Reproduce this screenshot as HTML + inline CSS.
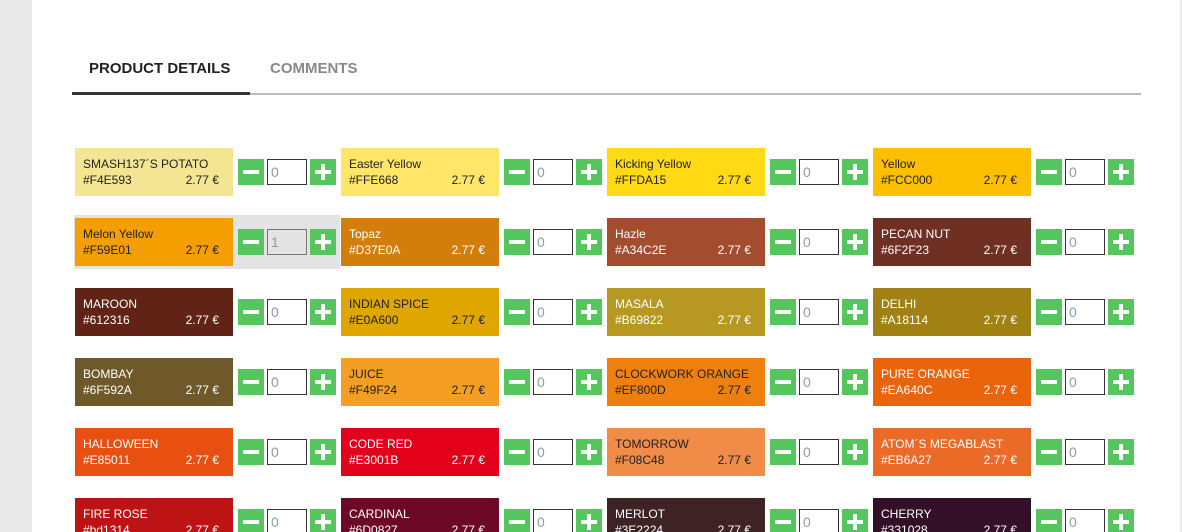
<!DOCTYPE html>
<html style="height:532px;overflow:hidden"><head><meta charset="utf-8"><style>
html,body{height:532px;overflow:hidden}
body{margin:0;width:1182px;background:#e9e9e9;font-family:"Liberation Sans",sans-serif;position:relative}
.page{position:absolute;left:32px;top:0;width:1148px;height:532px;background:#fff}
.tab{position:absolute;top:60px;font-size:15px;font-weight:bold}
.c{position:absolute;width:266px;height:54px}
.s{position:absolute;left:1px;top:3px;width:158px;height:48px;font-size:12px;color:#222}
.s .n{position:absolute;left:8px;top:9px;white-space:nowrap}
.s .h{position:absolute;left:8px;top:25px}
.s .p{position:absolute;right:14px;top:25px}
.w{color:#fff}
.b{position:absolute;top:14px;width:26px;height:26px;background:#55c65e}
.m{left:164px}.pl{left:236px}
.m::after{content:"";position:absolute;left:5px;top:11px;width:16px;height:4px;background:#fff}
.pl::before{content:"";position:absolute;left:5px;top:11px;width:16px;height:4px;background:#fff}
.pl::after{content:"";position:absolute;left:11px;top:5px;width:4px;height:16px;background:#fff}
.i{position:absolute;left:193px;top:14px;height:24px;border:1px solid #333;background:#fff;font-size:14px;color:#8a9ab0;line-height:24px;padding-left:3px;width:35px}
.hl{background:#e3e3e3}.hl .i{background:#e3e3e3;border-color:#777}
</style></head><body>
<div class="page"></div>
<div class="tab" style="left:89px;color:#222">PRODUCT DETAILS</div>
<div class="tab" style="left:270px;color:#888">COMMENTS</div>
<div style="position:absolute;left:72px;top:93px;width:1069px;height:2px;background:#bbb"></div>
<div style="position:absolute;left:72px;top:92px;width:178px;height:3px;background:#333"></div>

<div class="c" style="left:74px;top:145px"><div class="s" style="background:#F4E593"><span class="n">SMASH137´S POTATO</span><span class="h">#F4E593</span><span class="p">2.77 €</span></div><div class="b m"></div><div class="i">0</div><div class="b pl"></div></div>
<div class="c" style="left:340px;top:145px"><div class="s" style="background:#FFE668"><span class="n">Easter Yellow</span><span class="h">#FFE668</span><span class="p">2.77 €</span></div><div class="b m"></div><div class="i">0</div><div class="b pl"></div></div>
<div class="c" style="left:606px;top:145px"><div class="s" style="background:#FFDA15"><span class="n">Kicking Yellow</span><span class="h">#FFDA15</span><span class="p">2.77 €</span></div><div class="b m"></div><div class="i">0</div><div class="b pl"></div></div>
<div class="c" style="left:872px;top:145px"><div class="s" style="background:#FCC000"><span class="n">Yellow</span><span class="h">#FCC000</span><span class="p">2.77 €</span></div><div class="b m"></div><div class="i">0</div><div class="b pl"></div></div>

<div class="c hl" style="left:74px;top:215px"><div class="s" style="background:#F59E01"><span class="n">Melon Yellow</span><span class="h">#F59E01</span><span class="p">2.77 €</span></div><div class="b m"></div><div class="i">1</div><div class="b pl"></div></div>
<div class="c" style="left:340px;top:215px"><div class="s w" style="background:#D37E0A"><span class="n">Topaz</span><span class="h">#D37E0A</span><span class="p">2.77 €</span></div><div class="b m"></div><div class="i">0</div><div class="b pl"></div></div>
<div class="c" style="left:606px;top:215px"><div class="s w" style="background:#A34C2E"><span class="n">Hazle</span><span class="h">#A34C2E</span><span class="p">2.77 €</span></div><div class="b m"></div><div class="i">0</div><div class="b pl"></div></div>
<div class="c" style="left:872px;top:215px"><div class="s w" style="background:#6F2F23"><span class="n">PECAN NUT</span><span class="h">#6F2F23</span><span class="p">2.77 €</span></div><div class="b m"></div><div class="i">0</div><div class="b pl"></div></div>

<div class="c" style="left:74px;top:285px"><div class="s w" style="background:#612316"><span class="n">MAROON</span><span class="h">#612316</span><span class="p">2.77 €</span></div><div class="b m"></div><div class="i">0</div><div class="b pl"></div></div>
<div class="c" style="left:340px;top:285px"><div class="s" style="background:#E0A600"><span class="n">INDIAN SPICE</span><span class="h">#E0A600</span><span class="p">2.77 €</span></div><div class="b m"></div><div class="i">0</div><div class="b pl"></div></div>
<div class="c" style="left:606px;top:285px"><div class="s w" style="background:#B69822"><span class="n">MASALA</span><span class="h">#B69822</span><span class="p">2.77 €</span></div><div class="b m"></div><div class="i">0</div><div class="b pl"></div></div>
<div class="c" style="left:872px;top:285px"><div class="s w" style="background:#A18114"><span class="n">DELHI</span><span class="h">#A18114</span><span class="p">2.77 €</span></div><div class="b m"></div><div class="i">0</div><div class="b pl"></div></div>

<div class="c" style="left:74px;top:355px"><div class="s w" style="background:#6F592A"><span class="n">BOMBAY</span><span class="h">#6F592A</span><span class="p">2.77 €</span></div><div class="b m"></div><div class="i">0</div><div class="b pl"></div></div>
<div class="c" style="left:340px;top:355px"><div class="s" style="background:#F49F24"><span class="n">JUICE</span><span class="h">#F49F24</span><span class="p">2.77 €</span></div><div class="b m"></div><div class="i">0</div><div class="b pl"></div></div>
<div class="c" style="left:606px;top:355px"><div class="s" style="background:#EF800D"><span class="n">CLOCKWORK ORANGE</span><span class="h">#EF800D</span><span class="p">2.77 €</span></div><div class="b m"></div><div class="i">0</div><div class="b pl"></div></div>
<div class="c" style="left:872px;top:355px"><div class="s w" style="background:#EA640C"><span class="n">PURE ORANGE</span><span class="h">#EA640C</span><span class="p">2.77 €</span></div><div class="b m"></div><div class="i">0</div><div class="b pl"></div></div>

<div class="c" style="left:74px;top:425px"><div class="s w" style="background:#E85011"><span class="n">HALLOWEEN</span><span class="h">#E85011</span><span class="p">2.77 €</span></div><div class="b m"></div><div class="i">0</div><div class="b pl"></div></div>
<div class="c" style="left:340px;top:425px"><div class="s w" style="background:#E3001B"><span class="n">CODE RED</span><span class="h">#E3001B</span><span class="p">2.77 €</span></div><div class="b m"></div><div class="i">0</div><div class="b pl"></div></div>
<div class="c" style="left:606px;top:425px"><div class="s" style="background:#F08C48"><span class="n">TOMORROW</span><span class="h">#F08C48</span><span class="p">2.77 €</span></div><div class="b m"></div><div class="i">0</div><div class="b pl"></div></div>
<div class="c" style="left:872px;top:425px"><div class="s w" style="background:#EB6A27"><span class="n">ATOM´S MEGABLAST</span><span class="h">#EB6A27</span><span class="p">2.77 €</span></div><div class="b m"></div><div class="i">0</div><div class="b pl"></div></div>

<div class="c" style="left:74px;top:495px"><div class="s w" style="background:#bd1314"><span class="n">FIRE ROSE</span><span class="h">#bd1314</span><span class="p">2.77 €</span></div><div class="b m"></div><div class="i">0</div><div class="b pl"></div></div>
<div class="c" style="left:340px;top:495px"><div class="s w" style="background:#6D0827"><span class="n">CARDINAL</span><span class="h">#6D0827</span><span class="p">2.77 €</span></div><div class="b m"></div><div class="i">0</div><div class="b pl"></div></div>
<div class="c" style="left:606px;top:495px"><div class="s w" style="background:#3E2224"><span class="n">MERLOT</span><span class="h">#3E2224</span><span class="p">2.77 €</span></div><div class="b m"></div><div class="i">0</div><div class="b pl"></div></div>
<div class="c" style="left:872px;top:495px"><div class="s w" style="background:#331028"><span class="n">CHERRY</span><span class="h">#331028</span><span class="p">2.77 €</span></div><div class="b m"></div><div class="i">0</div><div class="b pl"></div></div>
</body></html>
